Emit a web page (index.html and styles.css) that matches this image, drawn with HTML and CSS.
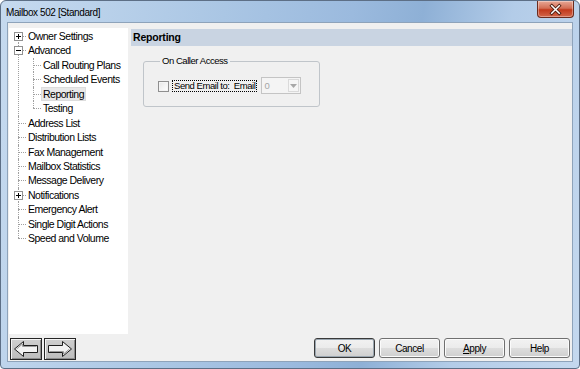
FILE: index.html
```html
<!DOCTYPE html>
<html lang="en">
<head>
    <meta charset="UTF-8">
    <title>Mailbox 502 [Standard]</title>
    <link rel="stylesheet" href="styles.css">
</head>
<body>
    <div class="window">
        <div class="titlebar">
            <span class="title">Mailbox 502 [Standard]</span>
            <button class="close">
                <svg width="37" height="17" viewBox="0 0 37 17">
                    <path d="M14.5 4.5 L22.5 12.5 M22.5 4.5 L14.5 12.5" stroke="#4a1c10" stroke-width="3.4" stroke-linecap="square"/>
                    <path d="M14.5 4.5 L22.5 12.5 M22.5 4.5 L14.5 12.5" stroke="#fff" stroke-width="1.6" stroke-linecap="square"/>
                </svg>
            </button>
        </div>
        <div class="client">
            <div class="main">
                <ul class="tree">
                    <li><span class="toggle"><svg width="9" height="9"><rect x="0.5" y="0.5" width="8" height="8" fill="#fff" stroke="#919191"/><path d="M2 4.5h5M4.5 2v5" stroke="#000"/></svg></span><div class="row"><span class="label">Owner Settings</span></div></li>
                    <li><span class="toggle"><svg width="9" height="9"><rect x="0.5" y="0.5" width="8" height="8" fill="#fff" stroke="#919191"/><path d="M2 4.5h5" stroke="#000"/></svg></span><div class="row"><span class="label">Advanced</span></div>
                        <ul class="sub">
                            <li><div class="row"><span class="label">Call Routing Plans</span></div></li>
                            <li><div class="row"><span class="label">Scheduled Events</span></div></li>
                            <li><div class="row"><span class="label selected">Reporting</span></div></li>
                            <li><div class="row"><span class="label">Testing</span></div></li>
                        </ul>
                    </li>
                    <li><div class="row"><span class="label">Address List</span></div></li>
                    <li><div class="row"><span class="label">Distribution Lists</span></div></li>
                    <li><div class="row"><span class="label">Fax Management</span></div></li>
                    <li><div class="row"><span class="label">Mailbox Statistics</span></div></li>
                    <li><div class="row"><span class="label">Message Delivery</span></div></li>
                    <li><span class="toggle"><svg width="9" height="9"><rect x="0.5" y="0.5" width="8" height="8" fill="#fff" stroke="#919191"/><path d="M2 4.5h5M4.5 2v5" stroke="#000"/></svg></span><div class="row"><span class="label">Notifications</span></div></li>
                    <li><div class="row"><span class="label">Emergency Alert</span></div></li>
                    <li><div class="row"><span class="label">Single Digit Actions</span></div></li>
                    <li><div class="row"><span class="label">Speed and Volume</span></div></li>
                </ul>
                <div class="pane">
                    <div class="pane-header">Reporting</div>
                    <fieldset class="group">
                        <legend>On Caller Access</legend>
                        <div class="check-row">
                            <span class="checkbox"></span>
                            <span class="focus-label">Send Email to:&nbsp; Email</span>
                            <div class="combo">
                                <span class="combo-value">0</span>
                                <span class="combo-arrow"><svg width="7" height="4"><path d="M0 0h7L3.5 4z" fill="#a8a8a8"/></svg></span>
                            </div>
                        </div>
                    </fieldset>
                </div>
            </div>
            <div class="footer">
                <div class="nav">
                    <button class="nav-btn">
                        <svg width="30" height="20" viewBox="0 0 30 20">
                            <path d="M3.5 10 L12.5 2.5 V6.5 H26.5 V13.5 H12.5 V17.5 Z" fill="#f2f2f2" stroke="#1e1e1e"/>
                            <path d="M5.5 10 L11.5 5 V7.5 H25.5" fill="none" stroke="#9a9a9a"/>
                        </svg>
                    </button>
                    <button class="nav-btn">
                        <svg width="30" height="20" viewBox="0 0 30 20">
                            <path d="M26.5 10 L17.5 2.5 V6.5 H3.5 V13.5 H17.5 V17.5 Z" fill="#f2f2f2" stroke="#1e1e1e"/>
                            <path d="M24.5 10 L18.5 15 V12.5 H4.5" fill="none" stroke="#9a9a9a"/>
                        </svg>
                    </button>
                </div>
                <div class="actions">
                    <button class="btn default">OK</button>
                    <button class="btn">Cancel</button>
                    <button class="btn"><u>A</u>pply</button>
                    <button class="btn">Help</button>
                </div>
            </div>
        </div>
    </div>
</body>
</html>
```

FILE: styles.css
```css
body {
    margin: 0;
    padding: 0;
    font-family: 'Liberation Sans', Arial, sans-serif;
    background: #fff;
}
.window {
    width: 580px;
    height: 369px;
    box-sizing: border-box;
    border: 1px solid #5d6f86;
    border-radius: 6px 6px 4px 4px;
    background: linear-gradient(100deg, #c6daef 0%, #aac6e4 35%, #9bbade 55%, #8eb0d6 66%, #b3cce8 80%, #c4d8ee 100%);
    display: flex;
    flex-direction: column;
}
.titlebar {
    height: 21px;
    display: flex;
    align-items: center;
    padding-left: 5px;
}
.title {
    font-size: 10px;
    letter-spacing: -0.4px;
    color: #000;
    margin-top: 1px;
}
.close {
    margin-left: auto;
    margin-right: 5px;
    align-self: flex-start;
    width: 37px;
    height: 17px;
    padding: 0;
    border: 1px solid #6b2b1e;
    border-top: none;
    border-radius: 0 0 4px 4px;
    background: linear-gradient(#e8a896, #d36e55 45%, #c2391c 55%, #d2664a);
    box-shadow: inset 0 0 0 1px rgba(255, 255, 255, 0.35);
    display: flex;
    align-items: center;
    justify-content: center;
}
.close svg {
    display: block;
}
.client {
    flex: 1;
    margin: 0 6px 6px 6px;
    border: 1px solid #8ea3ba;
    background: #f0f0f0;
    display: flex;
    flex-direction: column;
}
.main {
    display: flex;
    padding: 5px 0 0 1px;
    height: 311px;
    box-sizing: border-box;
}
.tree {
    width: 119px;
    height: 306px;
    box-sizing: border-box;
    margin: 0;
    padding: 1px 0 0 0;
    list-style: none;
    background: #fff;
    font-size: 10.5px;
    letter-spacing: -0.5px;
    color: #000;
}
.tree ul {
    list-style: none;
    margin: 0;
    padding: 0;
}
.tree li {
    position: relative;
    padding-left: 17px;
}
.tree li::before {
    content: "";
    position: absolute;
    left: 9px;
    top: 0;
    bottom: 0;
    border-left: 1px dotted #a0a0a0;
}
.tree > li:first-child::before {
    top: 7px;
}
.tree li:last-child::before {
    bottom: auto;
    height: 7px;
}
.tree li::after {
    content: "";
    position: absolute;
    left: 9px;
    top: 7px;
    width: 8px;
    border-top: 1px dotted #a0a0a0;
}
.tree .sub {
    margin-left: -17px;
}
.tree .sub li {
    padding-left: 32px;
}
.tree .sub li::before,
.tree .sub li::after {
    left: 24px;
}
.toggle {
    position: absolute;
    left: 5px;
    top: 3px;
    width: 9px;
    height: 9px;
    z-index: 1;
}
.toggle svg {
    display: block;
}
.row {
    height: 14.45px;
    line-height: 14.45px;
    white-space: nowrap;
}
.label {
    display: inline-block;
    padding: 0 2px;
    line-height: 14px;
}
.label.selected {
    background: #e8e8e8;
    box-shadow: inset 0 0 0 1px #dcdcdc;
}
.pane {
    flex: 1;
    margin-left: 3px;
    padding-top: 1px;
}
.pane-header {
    height: 17px;
    line-height: 17px;
    background: #c9d4e2;
    padding-left: 2px;
    font-weight: bold;
    font-size: 10.5px;
    letter-spacing: -0.2px;
    color: #000;
}
.group {
    width: 177px;
    box-sizing: border-box;
    margin: 9px 0 0 12px;
    padding: 10px 0 12px 14px;
    border: 1px solid #c0c5ca;
    border-radius: 3px;
    font-size: 9.5px;
    letter-spacing: -0.45px;
}
.group legend {
    padding: 0 2px;
    margin-left: 2px;
    line-height: 12px;
    color: #000;
}
.check-row {
    display: flex;
    align-items: center;
    height: 17px;
}
.checkbox {
    width: 11px;
    height: 11px;
    box-sizing: border-box;
    border: 1px solid #8f8f8f;
    background: linear-gradient(135deg, #e6e6e6, #fff);
    box-shadow: inset 0 0 0 1px #f4f4f4;
    margin-top: 1px;
}
.focus-label {
    margin-left: 3px;
    height: 12px;
    line-height: 10px;
    box-sizing: border-box;
    border: 1px dotted #000;
    padding: 0 1px;
    color: #000;
}
.combo {
    margin-left: 4px;
    width: 40px;
    height: 17px;
    box-sizing: border-box;
    border: 1px solid #c4c4c4;
    background: #f4f4f4;
    display: flex;
    align-items: center;
    justify-content: space-between;
}
.combo-value {
    padding-left: 2px;
    color: #a6a6a6;
}
.combo-arrow {
    width: 11px;
    height: 13px;
    margin-right: 1px;
    box-sizing: border-box;
    border: 1px solid #dadada;
    background: #f6f6f6;
    display: flex;
    align-items: center;
    justify-content: center;
}
.combo-arrow svg {
    display: block;
}
.footer {
    flex: 1;
    display: flex;
    justify-content: space-between;
    align-items: flex-start;
    padding: 4px 2px 0 2px;
}
.nav {
    display: flex;
    gap: 2px;
}
.nav-btn {
    width: 32px;
    height: 22px;
    padding: 0;
    border: 1px solid #262626;
    background: linear-gradient(#cfcfcf, #bdbdbd);
    box-shadow: inset 1px 1px 0 #f4f4f4, inset -1px -1px 0 #8c8c8c;
    display: flex;
    align-items: center;
    justify-content: center;
}
.nav-btn svg {
    display: block;
}
.actions {
    display: flex;
    gap: 4px;
}
.btn {
    width: 61px;
    height: 20px;
    padding: 0;
    border: 1px solid #707070;
    border-radius: 3px;
    background: linear-gradient(#f2f2f2, #ebebeb 50%, #dddddd 50%, #cfcfcf);
    box-shadow: inset 0 0 0 1px #fbfbfb;
    font-family: 'Liberation Sans', Arial, sans-serif;
    font-size: 10px;
    letter-spacing: -0.4px;
    color: #000;
}
.btn.default {
    border-color: #3a3a3a;
    box-shadow: inset 0 0 0 1px #9aa6b0;
}
```
